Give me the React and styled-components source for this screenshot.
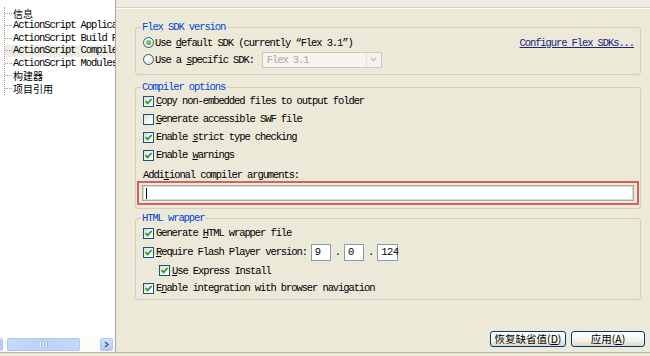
import styled, { createGlobalStyle } from "styled-components";

const mono = `"Liberation Mono", "DejaVu Sans Mono", monospace`;
const cjk = `"Noto Sans CJK SC", "Noto Sans", sans-serif`;

const GlobalStyle = createGlobalStyle`
    html, body {
        margin: 0;
        padding: 0;
        background: #ECE9D8;
    }
    * { box-sizing: border-box; }
`;

const Page = styled.div`
    width: 650px;
    height: 356px;
    display: flex;
    flex-direction: column;
    background: #ECE9D8;
    overflow: hidden;
    font-family: ${mono};
    font-size: 10.5px;
    letter-spacing: -1.1px;
    color: #000;
`;

const Main = styled.div`
    flex: 1;
    display: flex;
    min-height: 0;
`;

const Footer = styled.div`
    height: 4px;
    border-top: 1px solid #B9B6A6;
    background: #ECE9D8;
`;

/* ---------- left tree ---------- */

const Sidebar = styled.div`
    width: 116px;
    display: flex;
    flex-direction: column;
    background: #fff;
    border-right: 1px solid #A7A6AA;
    overflow: hidden;
`;

const Tree = styled.div`
    flex: 1;
    padding-top: 7px;
`;

const TreeList = styled.div`
    margin-left: 4px;
    border-left: 1px dotted #9A9A9A;
`;

const TreeItem = styled.div`
    display: flex;
    align-items: center;
    height: 12.5px;
    line-height: 11px;
    white-space: nowrap;
    font-family: ${p => (p.$cjk ? cjk : mono)};
    font-size: ${p => (p.$cjk ? "10px" : "10.5px")};
    letter-spacing: ${p => (p.$cjk ? "0" : "-1.1px")};
    background: ${p => (p.$selected ? "#EFEDE5" : "transparent")};
`;

const Twig = styled.span`
    flex: none;
    width: 7px;
    margin-right: 1px;
    border-top: 1px dotted #9A9A9A;
`;

const HScroll = styled.div`
    height: 15px;
    display: flex;
    align-items: center;
    background: #FBFBF8;
    padding-bottom: 1px;
`;

const ArrowBtn = styled.div`
    width: ${p => p.$w}px;
    height: 13px;
    border-radius: 2px;
    background: linear-gradient(#D2DEFC, #B6C9F6);
    border: 1px solid #B3C5F2;
    display: flex;
    align-items: center;
    justify-content: center;
`;

const Thumb = styled.div`
    width: 73px;
    height: 13px;
    margin-left: 4px;
    border-radius: 2px;
    border: 1px solid #B3C6F4;
    background: linear-gradient(90deg, #C8D7FA, #BFD0F8 50%, #C8D7FA);
    display: flex;
    align-items: center;
    justify-content: center;
    gap: 1px;
`;

const Grip = styled.span`
    width: 1px;
    height: 5px;
    background: #EEF3FF;
    box-shadow: 1px 0 0 #9DB3E8;
    margin-right: 1px;
`;

const ScrollEnd = styled.span`
    width: 2px;
`;

/* ---------- right panel ---------- */

const Panel = styled.div`
    flex: 1;
    display: flex;
    flex-direction: column;
`;

const TopStrip = styled.div`
    height: 8px;
    border-bottom: 1px solid #D6D2C2;
    box-shadow: 0 1px 0 #FFFFFF;
    background: #EDEBE2;
`;

const Content = styled.div`
    flex: 1;
    padding: 14px 9px 0 19px;
    display: flex;
    flex-direction: column;
`;

const Group = styled.fieldset`
    margin: ${p => p.$mt}px 0 0 0;
    padding: ${p => p.$pt || 0}px 6px ${p => p.$pb}px 7px;
    border: 1px solid #D0D0BF;
    border-radius: 3px;
    min-width: 0;
`;

const Legend = styled.legend`
    padding: 0 1px;
    margin-left: -2px;
    color: #0046D5;
    line-height: 10px;
`;

const Row = styled.div`
    display: flex;
    align-items: center;
    height: ${p => p.$h}px;
    padding-left: ${p => p.$indent || 0}px;
    white-space: nowrap;
`;

const U = styled.span`
    text-decoration: underline;
`;

const Label = styled.span`
    margin-left: ${p => p.$ml ?? 2}px;
`;

const CheckBox = styled.span`
    flex: none;
    width: 11px;
    height: 11px;
    border: 1px solid #1C5180;
    background: linear-gradient(135deg, #DCDCD5, #FFFFFF 80%);
    display: inline-flex;
    align-items: center;
    justify-content: center;
`;

const RadioBox = styled.span`
    flex: none;
    width: 11px;
    height: 11px;
    border-radius: 50%;
    border: 1px solid #2F5A88;
    background: radial-gradient(circle at 40% 40%, #FFFFFF, #E2E1DA);
    display: inline-flex;
    align-items: center;
    justify-content: center;
`;

const RadioDot = styled.span`
    width: 5px;
    height: 5px;
    border-radius: 50%;
    background: radial-gradient(circle at 35% 35%, #7BE07B, #21A121);
`;

const Check = ({ checked }) => (
    <CheckBox>
        {checked && (
            <svg width="9" height="9" viewBox="0 0 9 9">
                <polyline points="1.5,4.2 3.6,6.4 7.6,2" fill="none" stroke="#21A121" strokeWidth="1.8" />
            </svg>
        )}
    </CheckBox>
);

const Radio = ({ checked }) => <RadioBox>{checked && <RadioDot />}</RadioBox>;

const Spacer = styled.span`
    flex: 1;
`;

const Link = styled.span`
    color: #22227C;
    text-decoration: underline;
`;

const Combo = styled.div`
    width: 120px;
    height: 16px;
    margin-left: 8px;
    border: 1px solid #C9C7BA;
    background: #F5F4EE;
    display: flex;
    align-items: center;
    color: #ACA899;
    padding-left: 4px;
`;

const ComboButton = styled.span`
    margin-left: auto;
    width: 15px;
    height: 14px;
    border-left: 1px solid #E6E4DA;
    background: #F3F2EC;
    display: flex;
    align-items: center;
    justify-content: center;
`;

const FieldLabel = styled.div`
    margin-top: 6px;
    line-height: 10px;
    white-space: nowrap;
`;

const Highlight = styled.div`
    margin: 1px -5px 0 -6px;
    border: 2px solid #D5605C;
    padding: 2px 3px;
`;

const TextInput = styled.div`
    height: 16px;
    background: #fff;
    border: 1px solid #9DAFA8;
    box-shadow: inset 0 0 0 1px #D3DCD8;
    display: flex;
    align-items: center;
    padding-left: 3px;
`;

const Caret = styled.span`
    width: 1px;
    height: 11px;
    background: #000;
`;

const VersionBox = styled.div`
    width: ${p => p.$w}px;
    height: 17px;
    margin-left: ${p => p.$ml}px;
    border: 1px solid #7F9DB9;
    background: #fff;
    display: flex;
    align-items: center;
    padding-left: 3px;
    letter-spacing: -0.6px;
`;

const Dot = styled.span`
    margin-left: 4px;
`;

const ButtonBar = styled.div`
    display: flex;
    justify-content: flex-end;
    gap: 5px;
    padding: 0 5px 5px 0;
`;

const Button = styled.div`
    width: ${p => p.$w}px;
    height: 16px;
    border: 1px solid #003C74;
    border-radius: 3px;
    background: linear-gradient(#FFFFFF, #F3F2EC 60%, #DAD6CA);
    display: flex;
    align-items: center;
    justify-content: center;
    font-family: ${cjk};
    font-size: 10.5px;
    letter-spacing: 0;
    line-height: 1;
`;

const treeItems = [
    { text: "信息", cjk: true },
    { text: "ActionScript Applications" },
    { text: "ActionScript Build Path" },
    { text: "ActionScript Compiler", selected: true },
    { text: "ActionScript Modules" },
    { text: "构建器", cjk: true },
    { text: "项目引用", cjk: true },
];

export default function App() {
    return (
        <>
            <GlobalStyle />
            <Page>
                <Main>
                    <Sidebar>
                        <Tree>
                            <TreeList>
                                {treeItems.map(item => (
                                    <TreeItem key={item.text} $cjk={item.cjk} $selected={item.selected}>
                                        <Twig />
                                        {item.text}
                                    </TreeItem>
                                ))}
                            </TreeList>
                        </Tree>
                        <HScroll>
                            <ArrowBtn $w={3} />
                            <Thumb>
                                <Grip />
                                <Grip />
                                <Grip />
                            </Thumb>
                            <Spacer />
                            <ArrowBtn $w={13}>
                                <svg width="7" height="7" viewBox="0 0 7 7">
                                    <polyline points="2,1 5,3.5 2,6" fill="none" stroke="#4D6185" strokeWidth="1.6" />
                                </svg>
                            </ArrowBtn>
                            <ScrollEnd />
                        </HScroll>
                    </Sidebar>

                    <Panel>
                        <TopStrip />
                        <Content>
                            <Group $mt={0} $pt={2} $pb={6}>
                                <Legend>Flex SDK version</Legend>
                                <Row $h={17}>
                                    <Radio checked />
                                    <Label $ml={1}>Use <U>d</U>efault SDK (currently “Flex 3.1”)</Label>
                                    <Spacer />
                                    <Link>Configure Flex SDKs...</Link>
                                </Row>
                                <Row $h={17}>
                                    <Radio />
                                    <Label $ml={1}>Use a <U>s</U>pecific SDK:</Label>
                                    <Combo>
                                        Flex 3.1
                                        <ComboButton>
                                            <svg width="7" height="5" viewBox="0 0 7 5">
                                                <polyline points="1,1 3.5,3.5 6,1" fill="none" stroke="#C2C0B4" strokeWidth="1.4" />
                                            </svg>
                                        </ComboButton>
                                    </Combo>
                                </Row>
                            </Group>

                            <Group $mt={7} $pb={3}>
                                <Legend>Compiler options</Legend>
                                <Row $h={18}>
                                    <Check checked />
                                    <Label><U>C</U>opy non-embedded files to output folder</Label>
                                </Row>
                                <Row $h={18}>
                                    <Check />
                                    <Label><U>G</U>enerate accessible SWF file</Label>
                                </Row>
                                <Row $h={18}>
                                    <Check checked />
                                    <Label>Enable <U>s</U>trict type checking</Label>
                                </Row>
                                <Row $h={18}>
                                    <Check checked />
                                    <Label>Enable <U>w</U>arnings</Label>
                                </Row>
                                <FieldLabel>Addi<U>t</U>ional compiler arguments:</FieldLabel>
                                <Highlight>
                                    <TextInput>
                                        <Caret />
                                    </TextInput>
                                </Highlight>
                            </Group>

                            <Group $mt={4} $pt={1} $pb={2}>
                                <Legend>HTML wrapper</Legend>
                                <Row $h={18}>
                                    <Check checked />
                                    <Label>Generate <U>H</U>TML wrapper file</Label>
                                </Row>
                                <Row $h={20}>
                                    <Check checked />
                                    <Label><U>R</U>equire Flash Player version:</Label>
                                    <VersionBox $w={20} $ml={4}>9</VersionBox>
                                    <Dot>.</Dot>
                                    <VersionBox $w={20} $ml={4}>0</VersionBox>
                                    <Dot>.</Dot>
                                    <VersionBox $w={21} $ml={4}>124</VersionBox>
                                </Row>
                                <Row $h={17} $indent={16}>
                                    <Check checked />
                                    <Label><U>U</U>se Express Install</Label>
                                </Row>
                                <Row $h={18}>
                                    <Check checked />
                                    <Label>E<U>n</U>able integration with browser navigation</Label>
                                </Row>
                            </Group>
                        </Content>
                        <ButtonBar>
                            <Button $w={76}>恢复缺省值(<U>D</U>)</Button>
                            <Button $w={74}>应用(<U>A</U>)</Button>
                        </ButtonBar>
                    </Panel>
                </Main>
                <Footer />
            </Page>
        </>
    );
}
